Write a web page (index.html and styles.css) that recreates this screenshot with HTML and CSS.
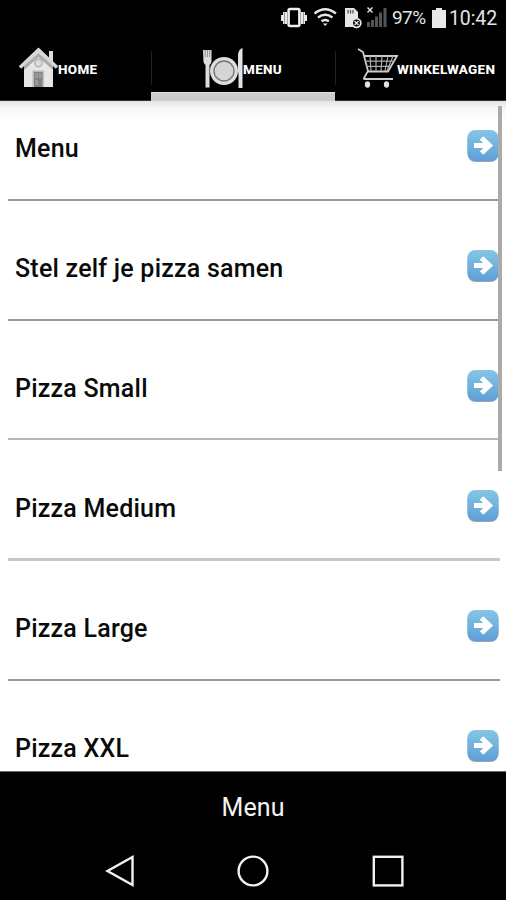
FILE: index.html
```html
<!DOCTYPE html>
<html lang="nl">
<head>
<meta charset="utf-8">
<title>Menu</title>
<link rel="stylesheet" href="styles.css">
</head>
<body>
<svg width="0" height="0" class="defs" aria-hidden="true">
  <defs>
    <linearGradient id="blue" x1="0" y1="0" x2="0" y2="1">
      <stop offset="0" stop-color="#85c6e5"/><stop offset="1" stop-color="#5f9fd6"/>
    </linearGradient>
    <symbol id="go" viewBox="0 0 32 33">
      <rect x="0.5" y="0.500" width="31" height="31.500" rx="8" fill="#9aa5ad"/>
      <rect x="0.5" y="0" width="31" height="31" rx="8" fill="url(#blue)"/>
      <path d="M7 15.500H22M14.500 8L22.500 15.500l-8 7.500" fill="none" stroke="#fff" stroke-width="5"/>
    </symbol>
  </defs>
</svg>
<div class="screen">
  <header class="status">
    <svg class="status-icons" width="120" height="36" viewBox="280 0 120 36">
      <g fill="#e8e8e8">
        <path d="M281 15h2v-3h4v12h-4v-3h-2zM301 12h4v3h2v6h-2v3h-4z"/>
        <path d="M284.500 12v12M303.500 12v12" stroke="#777" stroke-width=".7"/>
        <rect x="288.600" y="9" width="10.800" height="17" rx="1.500" fill="#000" stroke="#eee" stroke-width="2.600"/>
      </g>
      <g fill="none" stroke="#e8e8e8" stroke-width="2.400">
        <path d="M314.500 13.500q10.700-8.500 21.400 0M318 17.500q7.200-5.500 14.400 0M321.500 21.300q3.700-2.700 7.400 0"/>
      </g>
      <path d="M322.800 23.500h4.800L325.200 26z" fill="#e8e8e8"/>
      <path d="M345 8h9l4 4v15h-13z" fill="#e5e5e5"/>
      <path d="M348 10v3.500M350.500 10v3.500M353 10v3.500" stroke="#555" stroke-width="1.300"/>
      <circle cx="356.500" cy="23" r="4.300" fill="#000" stroke="#e5e5e5" stroke-width="1.800"/>
      <path d="M354.500 21l4 4m0-4l-4 4" stroke="#e5e5e5" stroke-width="1.400"/>
      <path d="M367.500 7.500l5 5m0-5l-5 5" stroke="#ddd" stroke-width="1.500"/>
      <path d="M367 22h3v5h-3zM371 20h3v7h-3zM375 16.500h3V27h-3zM379 12.500h3V27h-3zM383.500 8h3v19h-3z" fill="#555"/>
    </svg>
    <span class="battery-level">97%</span>
    <svg class="battery" width="14" height="20" viewBox="0 0 14 20"><path d="M4 0h6v2h4v18H0V2h4z" fill="#e8e8e8"/></svg>
    <span class="clock">10:42</span>
  </header>
  <nav class="tabs">
    <div class="tab tab-home">
      <svg width="40" height="42" viewBox="18 47 40 42">
        <path d="M49 51h4v10h-4z" fill="#ddd"/>
        <path d="M24 66l14.500-15L53 66v21H24z" fill="#e6e6e6"/>
        <path d="M24 66l14.500-13L53 66v4L38.500 57 24 70z" fill="#aaa"/>
        <path d="M20 67.500L38.500 50 57 67.500" fill="none" stroke="#d8d8d8" stroke-width="3.600"/>
        <circle cx="38.500" cy="63" r="3.700" fill="#ddd" stroke="#b5b5b5" stroke-width="1.500"/>
        <path d="M32.500 87V70.500h11.500V87z" fill="#bbb"/><path d="M34 87V72h8.500v15z" fill="#828282"/>
        <path d="M35 73h3v5h-3zM39 73h2.500v5H39zM35 80h3v5h-3z" fill="#999"/>
      </svg>
      <span>HOME</span>
    </div>
    <div class="tab tab-menu active">
      <svg width="42" height="42" viewBox="202 47 42 42">
        <path d="M203 50h8.500v12q-.7 2-2 3V87.500h-4V65q-1.400-1-2-3z" fill="#ddd"/>
        <path d="M205.300 50v7M207.500 50v7M209.600 50v7" stroke="#777" stroke-width=".7"/>
        <circle cx="224" cy="71" r="14" fill="#dedede"/>
        <circle cx="224" cy="71" r="10" fill="#d5d5d5" stroke="#777" stroke-width="1.400"/>
        <path d="M238 71V54q1-5 4.500-6v40h-4V75z" fill="#e1e1e1"/>
      </svg>
      <span>MENU</span>
    </div>
    <div class="tab tab-cart">
      <svg width="42" height="42" viewBox="357 47 42 42">
        <path d="M358 49l5 3 5 19-4.500 8" fill="none" stroke="#ccc" stroke-width="1.800"/>
        <path d="M364 56h33L388 71.500H367M363.500 79H393" fill="none" stroke="#ccc" stroke-width="1.800"/>
        <path d="M365 61.200h29M366 66.400h25M370 56l1 15M376 56v15M382 56l-1 15M388 56l-3 15M393 56l-6 15" fill="none" stroke="#aaa" stroke-width="1.200"/>
        <ellipse cx="367.500" cy="84.500" rx="2.600" ry="3.300" fill="#e2e2e2"/><ellipse cx="386.500" cy="84.500" rx="2.600" ry="3.300" fill="#e2e2e2"/>
      </svg>
      <span>WINKELWAGEN</span>
    </div>
  </nav>
  <main class="list">
    <div class="row first"><span>Menu</span><svg class="go"><use href="#go"/></svg></div>
    <div class="row"><span>Stel zelf je pizza samen</span><svg class="go"><use href="#go"/></svg></div>
    <div class="row small"><span>Pizza Small</span><svg class="go"><use href="#go"/></svg></div>
    <div class="row medium"><span>Pizza Medium</span><svg class="go"><use href="#go"/></svg></div>
    <div class="row"><span>Pizza Large</span><svg class="go"><use href="#go"/></svg></div>
    <div class="row last"><span>Pizza XXL</span><svg class="go"><use href="#go"/></svg></div>
    <div class="scrollbar"></div>
  </main>
  <footer class="title">Menu</footer>
  <nav class="keys">
    <svg width="30" height="34" viewBox="0 0 30 34"><path d="M27.500 3v28L2.500 17z" fill="none" stroke="#f2f2f2" stroke-width="2.400"/></svg>
    <svg width="34" height="34" viewBox="0 0 34 34"><circle cx="17" cy="17" r="14.400" fill="none" stroke="#f2f2f2" stroke-width="2.400"/></svg>
    <svg width="34" height="34" viewBox="0 0 34 34"><rect x="2.800" y="2.800" width="28.600" height="28.600" fill="none" stroke="#f2f2f2" stroke-width="2.400"/></svg>
  </nav>
</div>
</body>
</html>
```
FILE: styles.css
```css
* { box-sizing: border-box; }
body { margin: 0; background: #000; font-family: Roboto, sans-serif; }
svg { display: block; flex: none; }
.defs { position: absolute; }
.screen { width: 506px; height: 900px; display: flex; flex-direction: column; overflow: hidden; }
.status { height: 36px; flex: none; display: flex; align-items: center; padding-left: 280px; color: #e4e4e4; line-height: 36px; white-space: nowrap; }
.battery-level { width: 39px; margin-left: -8px; font-size: 19px; letter-spacing: -0.6px; }
.battery { margin-left: 1px; }
.clock { margin-left: 3px; padding-top: 1px; font-size: 19.5px; letter-spacing: -0.1px; }
.tabs { height: 65px; flex: none; display: grid; grid-template-columns: 151px 184px 171px; color: #fff; font-size: 13.5px; font-weight: 800; letter-spacing: 0.3px; border-bottom: 1px solid #333; }
.tab { position: relative; display: flex; align-items: center; }
.tab span { white-space: nowrap; padding-top: 1px; }
.tab-home { padding-left: 18px; }
.tab-menu { padding-left: 51px; }
.tab-menu span { margin-left: -1px; }
.tab-cart { padding-left: 22px; }
.tab-cart span { margin-left: -2px; }
.tab + .tab::before { content: ""; position: absolute; left: 0; top: 15px; width: 1px; height: 34px; background: #222; }
.active::after { content: ""; position: absolute; left: 0; right: 0; bottom: -1px; height: 8px; background: #ccc; border-top: 1px solid #e4e4e4; }
.list { position: relative; height: 670px; flex: none; background: linear-gradient(#e4e4e4, #f6f6f6 7px, #fff 20px); padding: 0 6px 0 8px; overflow: hidden; }
.row { height: 120px; display: flex; align-items: flex-end; justify-content: space-between; padding: 0 1px 36px 7px; border-bottom: 2px solid #999; color: #0a0a0a; font-size: 25px; font-weight: 500; line-height: 28px; letter-spacing: 0.22px; }
.row.first { height: 100px; }
.row.small { height: 119px; padding-bottom: 35px; border-color: #b8b8b8; }
.row.medium { height: 121px; padding-bottom: 35px; border-bottom: 3px solid #c8c8c8; }
.row.last { border-bottom: 0; padding-bottom: 38px; }
.go { width: 32px; height: 33px; }
.scrollbar { position: absolute; left: 498px; top: 5px; width: 4px; height: 365px; background: #aaa; }
.title { height: 71px; flex: none; text-align: center; line-height: 72px; color: #f4f4f4; font-size: 25px; letter-spacing: 0.1px; border-top: 1px solid #666; }
.keys { height: 58px; display: flex; justify-content: space-between; align-items: center; padding: 0 101px 0 105px; }
```
